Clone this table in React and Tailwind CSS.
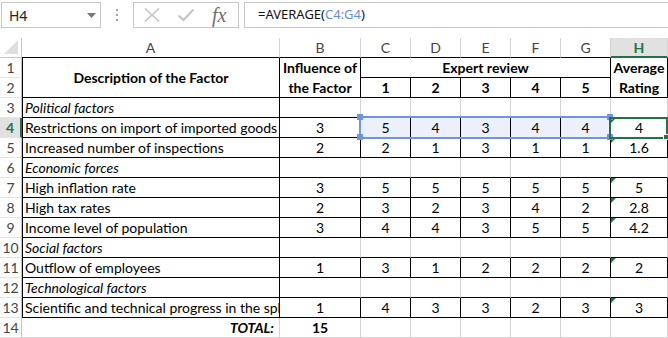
import React from 'react';

const rows = [
  { type: 'sec', n: 3, a: 'Political factors' },
  { type: 'data', n: 4, a: 'Restrictions on import of imported goods', b: '3', v: ['5', '4', '3', '4', '4'], h: '4', sel: true },
  { type: 'data', n: 5, a: 'Increased number of inspections', b: '2', v: ['2', '1', '3', '1', '1'], h: '1.6' },
  { type: 'sec', n: 6, a: 'Economic forces' },
  { type: 'data', n: 7, a: 'High inflation rate', b: '3', v: ['5', '5', '5', '5', '5'], h: '5' },
  { type: 'data', n: 8, a: 'High tax rates', b: '2', v: ['3', '2', '3', '4', '2'], h: '2.8' },
  { type: 'data', n: 9, a: 'Income level of population', b: '3', v: ['4', '4', '3', '5', '5'], h: '4.2' },
  { type: 'sec', n: 10, a: 'Social factors' },
  { type: 'data', n: 11, a: 'Outflow of employees', b: '1', v: ['3', '1', '2', '2', '2'], h: '2' },
  { type: 'sec', n: 12, a: 'Technological factors' },
  { type: 'data', n: 13, a: 'Scientific and technical progress in the sphere of production', b: '1', v: ['4', '3', '3', '2', '3'], h: '3' },
];

function Cell({ rb, bb, lb, cls = '', children }) {
  return (
    <div
      className={[
        'relative border-r border-b overflow-hidden whitespace-nowrap leading-[19px]',
        rb ? 'border-r-black' : 'border-r-[#d4d4d4]',
        bb ? 'border-b-black' : 'border-b-[#d4d4d4]',
        lb ? 'border-l border-l-black' : '',
        cls,
      ].join(' ')}
    >
      {children}
    </div>
  );
}

function RH({ n, active }) {
  return (
    <div
      className={[
        'border-b border-b-[#e4e4e4] flex items-center justify-center leading-[19px]',
        active
          ? 'bg-[#e1e1e1] text-[#217346] font-bold border-r-2 border-r-[#217346]'
          : 'border-r border-r-[#c6c6c6] text-[#444444]',
      ].join(' ')}
    >
      {n}
    </div>
  );
}

function ColH({ l, active }) {
  return (
    <div
      className={[
        'flex items-center justify-center border-r border-r-[#d4d4d4] leading-[19px]',
        active
          ? 'bg-[#e1e1e1] text-[#217346] font-bold border-b-2 border-b-[#217346]'
          : 'border-b border-b-black text-[#444444]',
      ].join(' ')}
    >
      {l}
    </div>
  );
}

function Tri() {
  return (
    <div className="absolute left-0 top-0 w-0 h-0 border-t-[5px] border-t-[#1d7a36] border-r-[5px] border-r-transparent" />
  );
}

export default function App() {
  return (
    <div className="relative w-[668px] h-[338px] overflow-hidden bg-white font-['Lato','Liberation_Sans',sans-serif] text-[14px] text-black">
      {/* Formula bar */}
      <div className="h-[38px] flex items-start pt-[2px] font-['Noto_Sans','Open_Sans',sans-serif]">
        <div className="ml-[1px] w-[100px] h-[26px] border border-[#c6c6c6] flex items-center justify-between pl-[7px] pr-[4px]">
          <span className="text-[14px] text-[#222222]">H4</span>
          <svg width="9" height="5" viewBox="0 0 9 5"><path d="M0 0 L9 0 L4.5 5 Z" fill="#777777" /></svg>
        </div>
        <div className="w-[32px] h-[26px] flex flex-col items-center justify-center gap-[3px]">
          <div className="w-[2px] h-[2px] bg-[#a0a0a0]" />
          <div className="w-[2px] h-[2px] bg-[#a0a0a0]" />
          <div className="w-[2px] h-[2px] bg-[#a0a0a0]" />
        </div>
        <div className="w-[106px] h-[26px] border border-[#c6c6c6] flex items-center pl-[9px]">
          <svg width="18" height="16" viewBox="0 0 18 16">
            <path d="M2 1.5 L16 14.5 M16 1.5 L2 14.5" stroke="#c4c4c4" strokeWidth="1.6" fill="none" />
          </svg>
          <svg className="ml-[16px]" width="18" height="14" viewBox="0 0 18 14">
            <path d="M1.5 7.5 L6.5 12 L16.5 1.5" stroke="#c4c4c4" strokeWidth="2" fill="none" />
          </svg>
          <span className="ml-[17px] font-['Liberation_Serif',serif] italic text-[20px] leading-[20px] text-[#6e6e6e]">fx</span>
        </div>
        <div className="ml-[5px] flex-1 h-[26px] border border-r-0 border-[#c6c6c6] flex items-center pl-[13px] text-[13px] text-[#111111]">
          <span>=AVERAGE(</span>
          <span className="text-[#6a8be2]">C4:G4</span>
          <span>)</span>
        </div>
      </div>

      {/* Sheet */}
      <div className="grid grid-cols-[22px_258px_81px_50px_50px_50px_50px_50px_57px] auto-rows-[20px]">
        {/* column header row */}
        <div className="relative border-r border-r-[#c6c6c6] border-b border-b-[#c6c6c6]">
          <div className="absolute right-[3px] bottom-[3px] w-0 h-0 border-b-[14px] border-b-[#dfdfdf] border-l-[14px] border-l-transparent" />
        </div>
        <ColH l="A" />
        <ColH l="B" />
        <ColH l="C" />
        <ColH l="D" />
        <ColH l="E" />
        <ColH l="F" />
        <ColH l="G" />
        <ColH l="H" active />

        {/* rows 1-2 header */}
        <RH n="1" />
        <Cell rb bb lb cls="row-span-2 flex items-center justify-center font-bold">Description of the Factor</Cell>
        <Cell rb bb cls="row-span-2 flex flex-col items-center justify-center font-bold">
          <span className="leading-[20px]">Influence of</span>
          <span className="leading-[20px]">the Factor</span>
        </Cell>
        <Cell rb bb cls="col-span-5 flex items-center justify-center font-bold">Expert review</Cell>
        <Cell rb bb cls="row-span-2 flex flex-col items-center justify-center font-bold">
          <span className="leading-[20px]">Average</span>
          <span className="leading-[20px]">Rating</span>
        </Cell>
        <RH n="2" />
        {['1', '2', '3', '4', '5'].map((x) => (
          <Cell key={x} rb bb cls="flex items-center justify-center font-bold">{x}</Cell>
        ))}

        {rows.map((r) =>
          r.type === 'sec' ? (
            <React.Fragment key={r.n}>
              <RH n={r.n} />
              <Cell rb bb lb cls="italic pl-[2px] flex items-center">{r.a}</Cell>
              <Cell bb />
              <Cell bb />
              <Cell bb />
              <Cell bb />
              <Cell bb />
              <Cell bb />
              <Cell bb />
            </React.Fragment>
          ) : (
            <React.Fragment key={r.n}>
              <RH n={r.n} active={r.sel} />
              <Cell rb bb lb cls="pl-[2px] flex items-center">{r.a}</Cell>
              <Cell rb bb cls="flex items-center justify-center">{r.b}</Cell>
              {r.v.map((x, i) => (
                <Cell key={i} rb bb cls={'flex items-center justify-center ' + (r.sel ? 'bg-[#ebf0fb]' : '')}>{x}</Cell>
              ))}
              <Cell rb bb cls="flex items-center justify-center">
                <Tri />
                {r.h}
              </Cell>
            </React.Fragment>
          )
        )}

        {/* row 14 */}
        <RH n="14" />
        <Cell cls="flex items-center justify-end pr-[5px] font-bold italic">TOTAL:</Cell>
        <Cell cls="flex items-center justify-center font-bold">15</Cell>
        <Cell />
        <Cell />
        <Cell />
        <Cell />
        <Cell />
        <Cell />
      </div>

      {/* selection overlays */}
      <div className="absolute left-[359px] top-[116px] w-[252px] h-[23px] border-2 border-[#6f93e6]" />
      <div className="absolute left-[357px] top-[114px] w-[6px] h-[6px] bg-[#6f93e6]" />
      <div className="absolute left-[607px] top-[114px] w-[6px] h-[6px] bg-[#6f93e6]" />
      <div className="absolute left-[357px] top-[134px] w-[6px] h-[6px] bg-[#6f93e6]" />
      <div className="absolute left-[607px] top-[134px] w-[6px] h-[6px] bg-[#6f93e6]" />
      <div className="absolute left-[609px] top-[117px] w-[59px] h-[22px] border-2 border-[#217346]" />
      <div className="absolute left-[663px] top-[134px] w-[6px] h-[6px] bg-[#217346] border border-white" />
    </div>
  );
}
